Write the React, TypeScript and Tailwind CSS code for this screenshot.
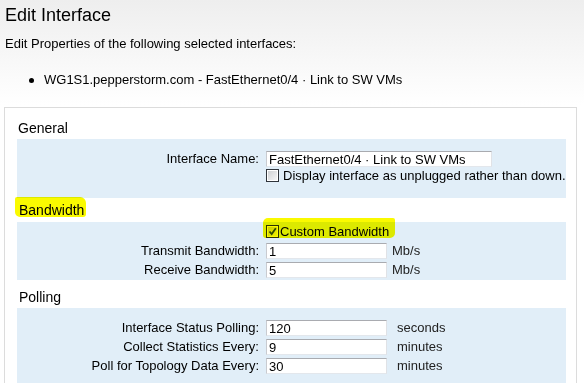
import React from "react";

function TextInput({ value, w }: { value: string; w: string }) {
  return (
    <input
      readOnly
      value={value}
      className={`${w} h-[16px] bg-white border border-t-[#a9abb0] border-l-[#c9cbd0] border-r-[#e0e2e6] border-b-[#e3e7ec] px-[2px] text-[13px] leading-[14px] text-black outline-none font-['Liberation_Sans',Arial,sans-serif]`}
    />
  );
}

function Check({ checked }: { checked?: boolean }) {
  return (
    <div className="w-[13px] h-[13px] border border-[#2f343b] bg-white p-[1px] shrink-0">
      <div className="w-full h-full bg-[linear-gradient(135deg,#cfd1d4,#f4f5f6)] relative">
        {checked && (
          <svg viewBox="0 0 9 9" className="absolute inset-0 w-[9px] h-[9px]">
            <path d="M1.5 4.5 L3.7 7 L7.8 1.2" fill="none" stroke="#2f4a78" strokeWidth="1.8" />
          </svg>
        )}
      </div>
    </div>
  );
}

function Row({ label, children }: { label: string; children: React.ReactNode }) {
  return (
    <div className="flex items-center h-[16px]">
      <div className="w-[249px] pr-[7px] text-right text-[13px] leading-[16px] text-black">{label}</div>
      {children}
    </div>
  );
}

export default function App() {
  return (
    <div className="h-[383px] overflow-hidden bg-[linear-gradient(to_bottom,#eeeeee_0px,#ffffff_105px)] text-black font-['Liberation_Sans',Arial,sans-serif]">
      <div className="pl-[5px]">
        <div className="pt-[4px] text-[18px] leading-[22px] text-black">Edit Interface</div>
        <div className="mt-[10px] text-[13px] leading-[15px]">Edit Properties of the following selected interfaces:</div>
        <div className="mt-[21px] flex items-center h-[15px]">
          <span className="ml-[24px] w-[5px] h-[5px] rounded-full bg-black mt-[1px]" />
          <span className="ml-[10px] text-[13px] leading-[15px]">WG1S1.pepperstorm.com - FastEthernet0/4 · Link to SW VMs</span>
        </div>
      </div>

      <div className="ml-[4px] mt-[20px] w-[573px] h-[400px] border border-b-0 border-[#dcdcdc] bg-white pl-[12px] pr-[10px]">
        {/* General */}
        <div className="pt-[12px] pb-[3px] pl-[1px] text-[14px] leading-[16px]">General</div>
        <div className="bg-[#e1eef8] pt-[12px] pb-[16px]">
          <Row label="Interface Name:">
            <TextInput value="FastEthernet0/4 · Link to SW VMs" w="w-[226px]" />
          </Row>
          <div className="mt-[2px] flex items-center h-[13px] pl-[249px]">
            <Check />
            <span className="ml-[4px] text-[13px] leading-[13px]">Display interface as unplugged rather than down.</span>
          </div>
        </div>

        {/* Bandwidth */}
        <div className="pt-[4px] pb-[4px] pl-[2px] text-[14px] leading-[16px] relative">
          <span>Bandwidth</span>
          <div className="absolute left-[-2px] top-[-1px] w-[71px] h-[20px] bg-[#fafa00] mix-blend-multiply rounded-tl-[2px] rounded-tr-[6px] rounded-bl-[5px] rounded-br-[3px]" />
        </div>
        <div className="bg-[#e1eef8] pt-[3px] pb-[2px]">
          <div className="flex items-center h-[13px] pl-[249px] relative">
            <Check checked />
            <span className="ml-[1px] text-[13px] leading-[13px]">Custom Bandwidth</span>
            <div className="absolute left-[246px] top-[-7px] w-[132px] h-[20px] bg-[#fafa00] mix-blend-multiply rounded-tl-[5px] rounded-tr-[2px] rounded-bl-[3px] rounded-br-[5px]" />
          </div>
          <div className="mt-[5px] flex flex-col gap-[3px]">
            <Row label="Transmit Bandwidth:">
              <TextInput value="1" w="w-[121px]" />
              <span className="ml-[5px] text-[13px] text-[#222]">Mb/s</span>
            </Row>
            <Row label="Receive Bandwidth:">
              <TextInput value="5" w="w-[121px]" />
              <span className="ml-[5px] text-[13px] text-[#222]">Mb/s</span>
            </Row>
          </div>
        </div>

        {/* Polling */}
        <div className="pt-[9px] pb-[3px] pl-[2px] text-[14px] leading-[16px]">Polling</div>
        <div className="bg-[#e1eef8] pt-[12px] pb-[20px] flex flex-col gap-[3px]">
          <Row label="Interface Status Polling:">
            <TextInput value="120" w="w-[121px]" />
            <span className="ml-[10px] text-[13px] text-[#222]">seconds</span>
          </Row>
          <Row label="Collect Statistics Every:">
            <TextInput value="9" w="w-[121px]" />
            <span className="ml-[10px] text-[13px] text-[#222]">minutes</span>
          </Row>
          <Row label="Poll for Topology Data Every:">
            <TextInput value="30" w="w-[121px]" />
            <span className="ml-[10px] text-[13px] text-[#222]">minutes</span>
          </Row>
        </div>
      </div>
    </div>
  );
}
